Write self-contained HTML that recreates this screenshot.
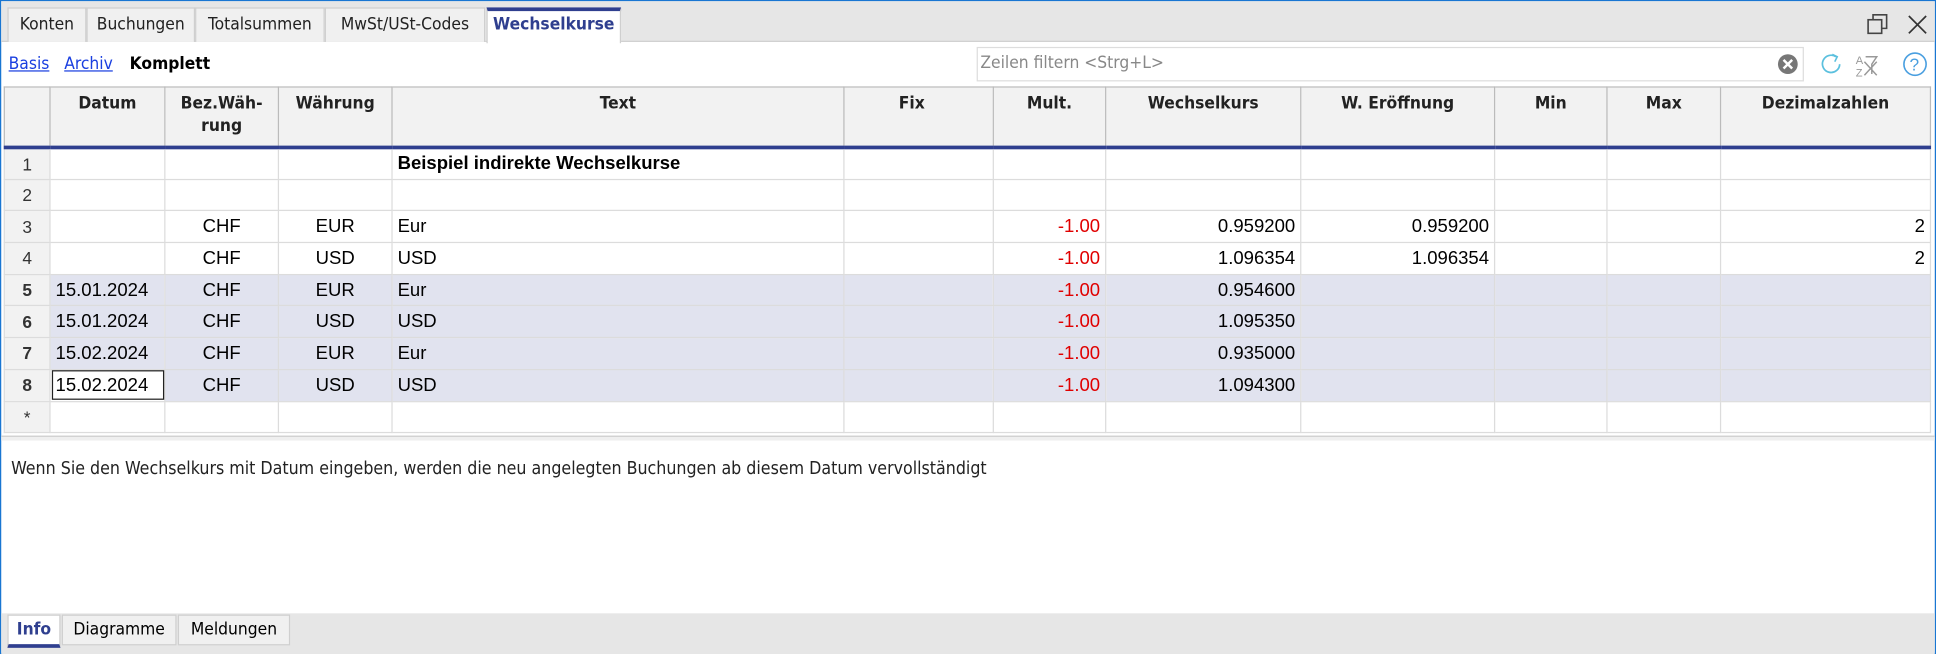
<!DOCTYPE html>
<html><head><meta charset="utf-8"><style>
*{box-sizing:border-box;margin:0;padding:0}
html,body{width:1936px;height:654px;overflow:hidden;background:#fff}
#w{position:absolute;left:0;top:0;width:1568px;height:530px;transform:scale(1.2347,1.2340);transform-origin:0 0;font-family:"Liberation Sans",sans-serif;border:1px solid #1976d2;background:#fff}
.tabbar{position:absolute;left:0;top:0;width:1566px;height:33px;background:#e6e6e6;border-bottom:1px solid #d0d0d0}
.tab{position:absolute;top:5px;height:28px;background:#f0f0f0;border:1px solid #cfcfcf;border-bottom:none;font-size:14px;line-height:26px;text-align:center;color:#222;font-family:"DejaVu Sans Condensed","Liberation Sans",sans-serif}
.tab.act{background:#fff;border-top:3px solid #2f3f8f;color:#2f3f8f;font-weight:bold;height:29px;line-height:23px}
.lnk{position:absolute;top:43px;font-size:14px;font-family:"DejaVu Sans Condensed","Liberation Sans",sans-serif}
.filter{position:absolute;left:790px;top:37px;width:670px;height:28px;border:1px solid #ddd;font-size:14px;color:#888;padding:4px 2px;font-family:"DejaVu Sans Condensed","Liberation Sans",sans-serif}
table{position:absolute;left:2px;top:69px;border-collapse:collapse;table-layout:fixed;font-size:15px}
td,th{border:1px solid #dcdcdc;height:25.7px;padding:0 4px;white-space:nowrap;overflow:hidden}
th{background:#f2f2f2;font-size:14px;vertical-align:top;padding-top:4px;height:49px;color:#222;border-color:#bbb;border-bottom:3px solid #2f3f8f;line-height:18px;font-family:"DejaVu Sans Condensed","Liberation Sans",sans-serif}
td.n{background:#f2f2f2;text-align:center;font-size:14px;color:#333}
td.c{text-align:center}td.r{text-align:right}
.red{color:#e00000}
tr.s td{background:#e1e3ef}tr.s td.n{font-weight:bold;background:#f2f2f2}
.info{position:absolute;left:8px;top:371px;font-size:14.3px;color:#222;font-family:"DejaVu Sans Condensed","Liberation Sans",sans-serif}
.bbar{position:absolute;left:0;top:496px;width:1566px;height:33px;background:#e6e6e6}
.bt{position:absolute;top:1px;height:25px;border:1px solid #cfcfcf;background:#f0f0f0;font-size:14px;line-height:23px;text-align:center;font-family:"DejaVu Sans Condensed","Liberation Sans",sans-serif}
</style></head><body><div id="w">
<div class="tabbar">
<div class="tab" style="left:5px;width:64px">Konten</div>
<div class="tab" style="left:69px;width:88px">Buchungen</div>
<div class="tab" style="left:157px;width:105px">Totalsummen</div>
<div class="tab" style="left:262px;width:130px">MwSt/USt-Codes</div>
<div class="tab act" style="left:393px;width:109px">Wechselkurse</div>
<svg style="position:absolute;left:1510px;top:9px" width="50" height="20"><rect x="2" y="6" width="11" height="11" fill="none" stroke="#444" stroke-width="1.3"/><path d="M6 6V2h11v11h-4" fill="none" stroke="#444" stroke-width="1.3"/><path d="M35 3l14 14M49 3L35 17" stroke="#333" stroke-width="1.4"/></svg>
</div>
<span class="lnk" style="left:6px;color:#1a3fe0;text-decoration:underline">Basis</span>
<span class="lnk" style="left:51px;color:#1a3fe0;text-decoration:underline">Archiv</span>
<span class="lnk" style="left:104px;font-weight:bold">Komplett</span>
<div class="filter">Zeilen filtern &lt;Strg+L&gt;</div>
<svg style="position:absolute;left:1436px;top:40px" width="130" height="24"><circle cx="11" cy="11" r="8" fill="#777"/><path d="M7.5 7.5l7 7M14.5 7.5l-7 7" stroke="#fff" stroke-width="2"/><path d="M50 5a7 7 0 1 0 3 6" fill="none" stroke="#5bc0de" stroke-width="1.4"/><path d="M47 3l4 2-2 4" fill="none" stroke="#5bc0de" stroke-width="1.3"/><text x="66" y="11" font-size="9" fill="#999" font-family="Liberation Sans">A</text><text x="66" y="21" font-size="9" fill="#999" font-family="Liberation Sans">Z</text><path d="M74 5h9l-4 6v8M73 9l10 11M83 9L73 20" fill="none" stroke="#999" stroke-width="1.2"/><circle cx="114" cy="11" r="9" fill="none" stroke="#4a9fe0" stroke-width="1.3"/><text x="109.5" y="16" font-size="14" fill="#4a9fe0" font-family="Liberation Sans">?</text></svg>
<table>
<colgroup><col style="width:37px"><col style="width:93px"><col style="width:92px"><col style="width:92px"><col style="width:366px"><col style="width:121px"><col style="width:91px"><col style="width:158px"><col style="width:157px"><col style="width:91px"><col style="width:92px"><col style="width:170px"></colgroup>
<tr><th></th><th>Datum</th><th>Bez.Wäh-<br>rung</th><th>Währung</th><th>Text</th><th style="text-align:right;padding-right:55px">Fix</th><th>Mult.</th><th>Wechselkurs</th><th>W. Eröffnung</th><th>Min</th><th>Max</th><th>Dezimalzahlen</th></tr>
<tr><td class="n">1</td><td></td><td></td><td></td><td style="font-weight:bold">Beispiel indirekte Wechselkurse</td><td></td><td></td><td></td><td></td><td></td><td></td><td></td></tr>
<tr><td class="n">2</td><td></td><td></td><td></td><td></td><td></td><td></td><td></td><td></td><td></td><td></td><td></td></tr>
<tr><td class="n">3</td><td></td><td class="c">CHF</td><td class="c">EUR</td><td>Eur</td><td></td><td class="r red">-1.00</td><td class="r">0.959200</td><td class="r">0.959200</td><td></td><td></td><td class="r">2</td></tr>
<tr><td class="n">4</td><td></td><td class="c">CHF</td><td class="c">USD</td><td>USD</td><td></td><td class="r red">-1.00</td><td class="r">1.096354</td><td class="r">1.096354</td><td></td><td></td><td class="r">2</td></tr>
<tr class="s"><td class="n">5</td><td>15.01.2024</td><td class="c">CHF</td><td class="c">EUR</td><td>Eur</td><td></td><td class="r red">-1.00</td><td class="r">0.954600</td><td></td><td></td><td></td><td></td></tr>
<tr class="s"><td class="n">6</td><td>15.01.2024</td><td class="c">CHF</td><td class="c">USD</td><td>USD</td><td></td><td class="r red">-1.00</td><td class="r">1.095350</td><td></td><td></td><td></td><td></td></tr>
<tr class="s"><td class="n">7</td><td>15.02.2024</td><td class="c">CHF</td><td class="c">EUR</td><td>Eur</td><td></td><td class="r red">-1.00</td><td class="r">0.935000</td><td></td><td></td><td></td><td></td></tr>
<tr class="s"><td class="n">8</td><td style="background:#fff;outline:1px solid #222;outline-offset:-2px">15.02.2024</td><td class="c">CHF</td><td class="c">USD</td><td>USD</td><td></td><td class="r red">-1.00</td><td class="r">1.094300</td><td></td><td></td><td></td><td></td></tr>
<tr><td class="n">*</td><td></td><td></td><td></td><td></td><td></td><td></td><td></td><td></td><td></td><td></td><td></td></tr>
</table>
<div style="position:absolute;left:0;top:352px;width:1566px;height:4px;background:#efefef;border-top:1px solid #ccc"></div>
<div class="info">Wenn Sie den Wechselkurs mit Datum eingeben, werden die neu angelegten Buchungen ab diesem Datum vervollständigt</div>
<div class="bbar">
<div class="bt" style="left:5px;width:43px;background:#fff;border-bottom:3px solid #2f3f8f;color:#2f3f8f;font-weight:bold;height:27px">Info</div>
<div class="bt" style="left:49px;width:93px">Diagramme</div>
<div class="bt" style="left:143px;width:91px">Meldungen</div>
</div>
</div></body></html>
